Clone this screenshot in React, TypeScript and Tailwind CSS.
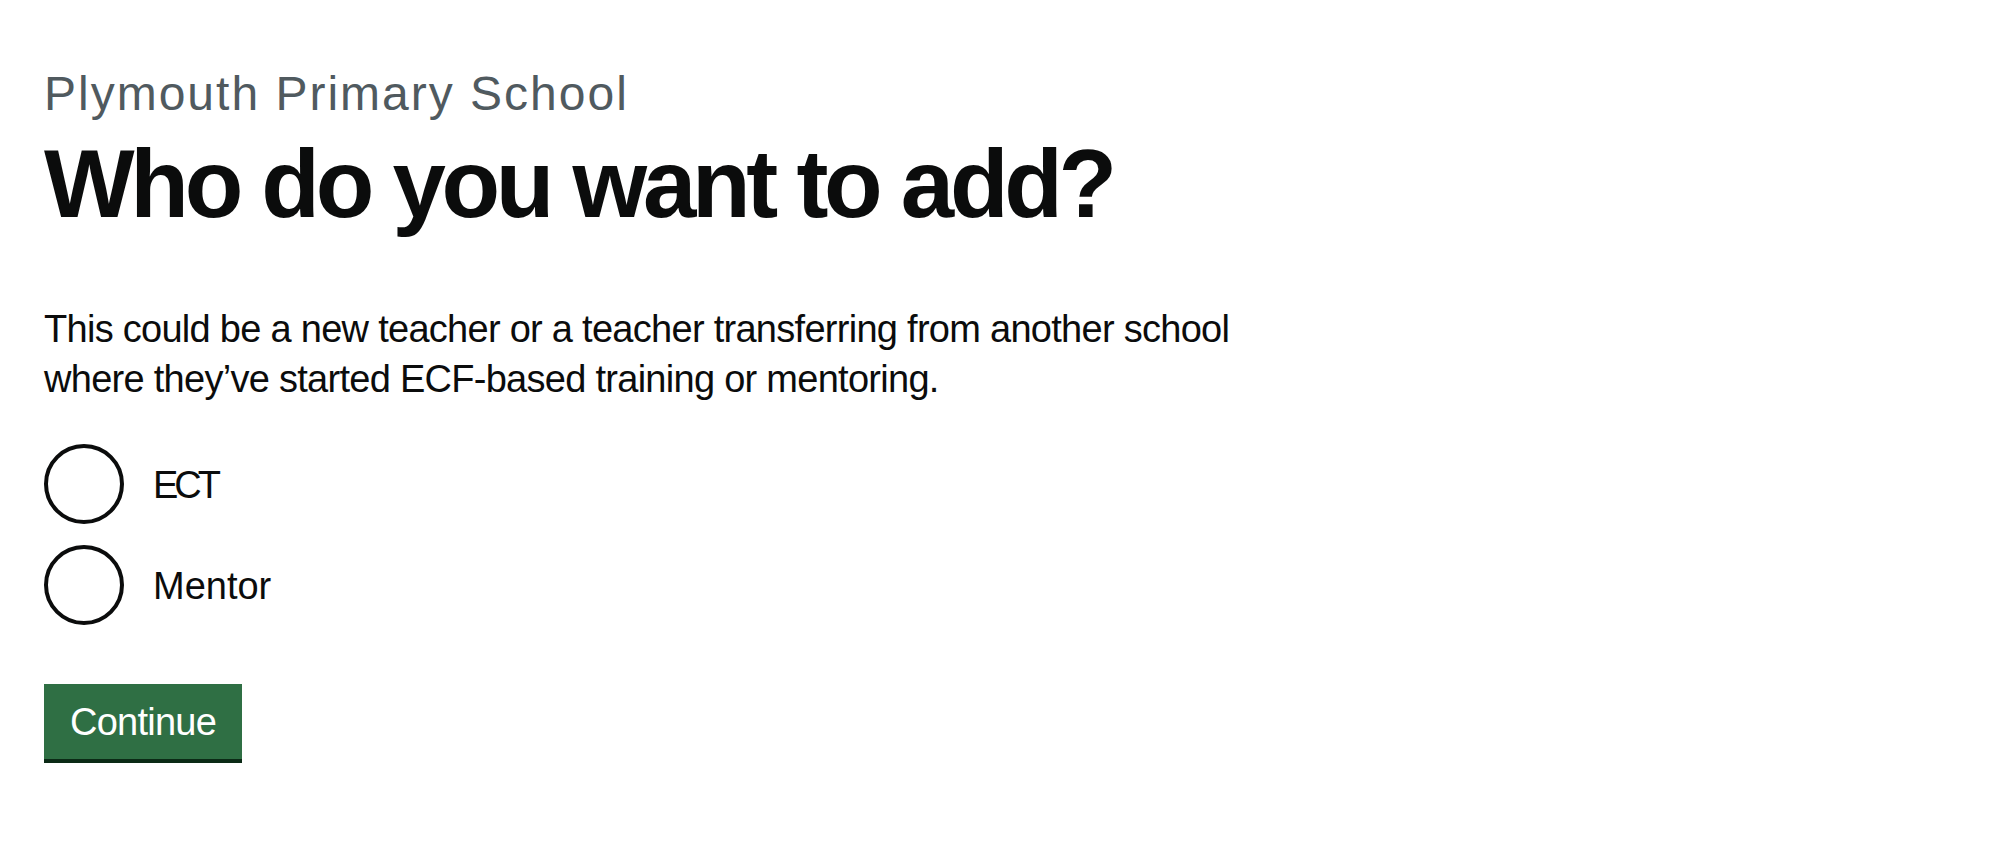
import React from "react";

function Radio({ label, tracking }: { label: string; tracking: string }) {
  return (
    <div className="flex items-center h-[80px]">
      <span className="block w-[80px] h-[80px] rounded-full border-4 border-[#0b0c0c] bg-white shrink-0" />
      <span className={`ml-[29px] pt-[2px] text-[38px] leading-[50px] text-[#0b0c0c] ${tracking}`}>{label}</span>
    </div>
  );
}

export default function App() {
  return (
    <div className="min-h-[850px] w-full bg-white pl-[44px] pt-[64px] font-['Liberation_Sans',Arial,sans-serif] text-[#0b0c0c]">
      <span className="block text-[48px] leading-[60px] text-[#505a5f] mb-[10px] tracking-[2px]">
        Plymouth Primary School
      </span>
      <h1 className="text-[96px] leading-[100px] font-bold mb-[70px] tracking-[-4.3px]">
        Who do you want to add?
      </h1>
      <p className="text-[38px] leading-[50px] mb-[40px] tracking-[-0.72px]">
        This could be a new teacher or a teacher transferring from another school
        <br />
        where they’ve started ECF-based training or mentoring.
      </p>
      <div className="flex flex-col gap-[21px]">
        <Radio label="ECT" tracking="tracking-[-4px]" />
        <Radio label="Mentor" tracking="tracking-[0px]" />
      </div>
      <button
        type="button"
        className="mt-[59px] w-[198px] h-[75px] bg-[#2f6f44] text-white text-[38px] leading-[50px] tracking-[-0.75px] shadow-[0_4px_0_#0b2a16] flex items-center justify-center"
      >
        Continue
      </button>
    </div>
  );
}
